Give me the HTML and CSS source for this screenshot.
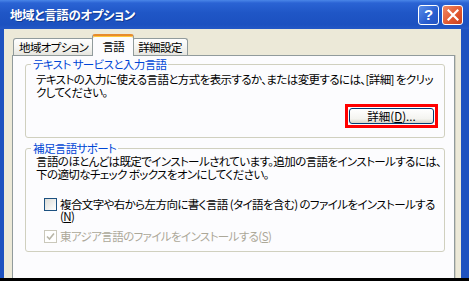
FILE: index.html
```html
<!DOCTYPE html>
<html lang="ja">

<head>
    <meta charset="UTF-8">
    <title>地域と言語のオプション</title>
    <link rel="stylesheet" href="styles.css">
</head>

<body>
    <div class="window">
        <div class="titlebar">
            <span class="title">地域と言語のオプション</span>
            <div class="caption-btns">
                <span class="cbtn help">?</span>
                <span class="cbtn close">
                    <svg width="12" height="12" viewBox="0 0 12 12">
                        <path d="M1.5 1.5 L10.5 10.5 M10.5 1.5 L1.5 10.5" stroke="#fff" stroke-width="2.2" stroke-linecap="square" fill="none" />
                    </svg>
                </span>
            </div>
        </div>

        <div class="client">
            <ul class="tabs">
                <li class="tab">地域オプション</li>
                <li class="tab active">言語</li>
                <li class="tab">詳細設定</li>
            </ul>

            <div class="panel">
                <!-- テキスト サービス -->
                <fieldset class="group">
                    <legend>テキスト サービスと入力言語</legend>
                    <p class="desc">テキストの入力に使える言語と方式を表示するか、または変更するには、[詳細] をクリッ<br>クしてください。</p>
                    <div class="btn-row">
                        <span class="highlight"><button class="btn">詳細(<u>D</u>)...</button></span>
                    </div>
                </fieldset>

                <!-- 補足言語サポート -->
                <fieldset class="group group2">
                    <legend>補足言語サポート</legend>
                    <p class="desc">言語のほとんどは既定でインストールされています。追加の言語をインストールするには、<br>下の適切なチェック ボックスをオンにしてください。</p>
                    <div class="check first">
                        <span class="box"></span>
                        <span class="label">複合文字や右から左方向に書く言語 (タイ語を含む) のファイルをインストールする<br>(<u>N</u>)</span>
                    </div>
                    <div class="check disabled">
                        <span class="box">
                            <svg width="9" height="9" viewBox="0 0 9 9">
                                <path d="M1 4.5 L3.5 7 L8 1.5" stroke="#b8b6a8" stroke-width="1.6" fill="none" />
                            </svg>
                        </span>
                        <span class="label">東アジア言語のファイルをインストールする(<u>S</u>)</span>
                    </div>
                </fieldset>
            </div>
        </div>
    </div>
</body>

</html>
```

FILE: styles.css
```css
* {
    margin: 0;
    padding: 0;
    box-sizing: border-box;
}

body {
    width: 469px;
    height: 281px;
    overflow: hidden;
    font-family: "Noto Sans CJK JP", "Noto Sans", sans-serif;
    font-size: 11.5px;
    letter-spacing: -0.6px;
    font-feature-settings: "palt";
    color: #000;
}

.window {
    height: 281px;
    display: flex;
    flex-direction: column;
    background: #1e52c0;
    border-bottom: 3px solid #000;
}

/* タイトルバー */
.titlebar {
    height: 29px;
    flex: none;
    display: flex;
    align-items: center;
    padding: 0 6px 0 10px;
    background: linear-gradient(#4a86e8 0, #2a63d4 3px, #1f56c6 45%, #1c51c0 85%, #2458c6 100%);
}

.title {
    flex: 1;
    color: #fff;
    font-weight: bold;
    font-size: 12.5px;
    letter-spacing: -0.4px;
    text-shadow: 1px 1px 0 #0f3a94;
}

.caption-btns {
    display: flex;
    gap: 3px;
}

.cbtn {
    width: 21px;
    height: 20px;
    border: 1px solid #fff;
    border-radius: 3px;
    display: flex;
    align-items: center;
    justify-content: center;
    color: #fff;
    font-family: "Liberation Sans", sans-serif;
    font-weight: bold;
    font-size: 15px;
    letter-spacing: 0;
}

.help {
    background: linear-gradient(135deg, #5b8ee8, #2a5ed0 60%, #2453c2);
}

.close {
    background: linear-gradient(135deg, #f08a66, #e0562e 60%, #c8401e);
}

/* 本体 */
.client {
    flex: 1;
    min-height: 0;
    margin: 0 8px 0 4px;
    padding: 5px 6px 0 8px;
    background: #ece9d8;
    display: flex;
    flex-direction: column;
}

.tabs {
    list-style: none;
    display: flex;
    align-items: flex-end;
    margin-left: 1px;
    height: 21px;
    flex: none;
}

.tab {
    height: 17px;
    padding: 0 5px;
    border: 1px solid #919b9c;
    border-bottom: none;
    border-radius: 3px 3px 0 0;
    background: linear-gradient(#fff, #f3f3ef 60%, #e6e5df);
    display: flex;
    align-items: center;
    line-height: 13px;
}

.tab.active {
    height: 22px;
    padding: 0 9px;
    margin: 0 -2px -1px;
    background: #fcfcfe;
    border-top: 2px solid #e68b2c;
    box-shadow: inset 0 1px 0 #ffc83c;
    position: relative;
    z-index: 1;
}

.panel {
    flex: 1;
    background: #fcfcfe;
    border: 1px solid #919b9c;
    border-bottom: none;
    box-shadow: 1px 0 0 #d0cec0;
    padding: 2px 9px 0 12px;
}

.group {
    min-width: 0;
    border: 1px solid #d0d0bf;
    border-radius: 3px;
    padding: 0 6px 9px 10px;
}

.group legend {
    color: #0046d5;
    padding: 0 2px;
    margin-left: -5px;
    line-height: 13px;
}

.desc {
    line-height: 13px;
    margin-top: 2px;
    white-space: nowrap;
}

.btn-row {
    display: flex;
    justify-content: flex-end;
    margin-top: 5px;
}

.highlight {
    display: inline-flex;
    border: 3px solid #f00;
    padding: 1px;
}

.btn {
    width: 85px;
    height: 16px;
    border: 1px solid #003c74;
    border-radius: 3px;
    background: linear-gradient(#fff, #f4f4f0 70%, #d8d4c8);
    font: inherit;
    line-height: 14px;
    color: #000;
}

.group2 {
    margin-top: 4px;
    padding-bottom: 8px;
}

.group2 .desc {
    margin-top: 0;
}

.check {
    display: flex;
    align-items: flex-start;
    margin-left: 8px;
    line-height: 12px;
}

.check.first {
    margin-top: 17px;
}

.check.disabled {
    margin-top: 8px;
    color: #aca899;
}

.box {
    width: 13px;
    height: 13px;
    flex: none;
    margin: 0 3px 0 0;
    border: 1px solid #1c5180;
    background: linear-gradient(135deg, #dcdcd7, #fff);
    display: flex;
    align-items: center;
    justify-content: center;
}

.disabled .box {
    border-color: #cac8bb;
    background: #fff;
}

.label {
    white-space: nowrap;
}
```
